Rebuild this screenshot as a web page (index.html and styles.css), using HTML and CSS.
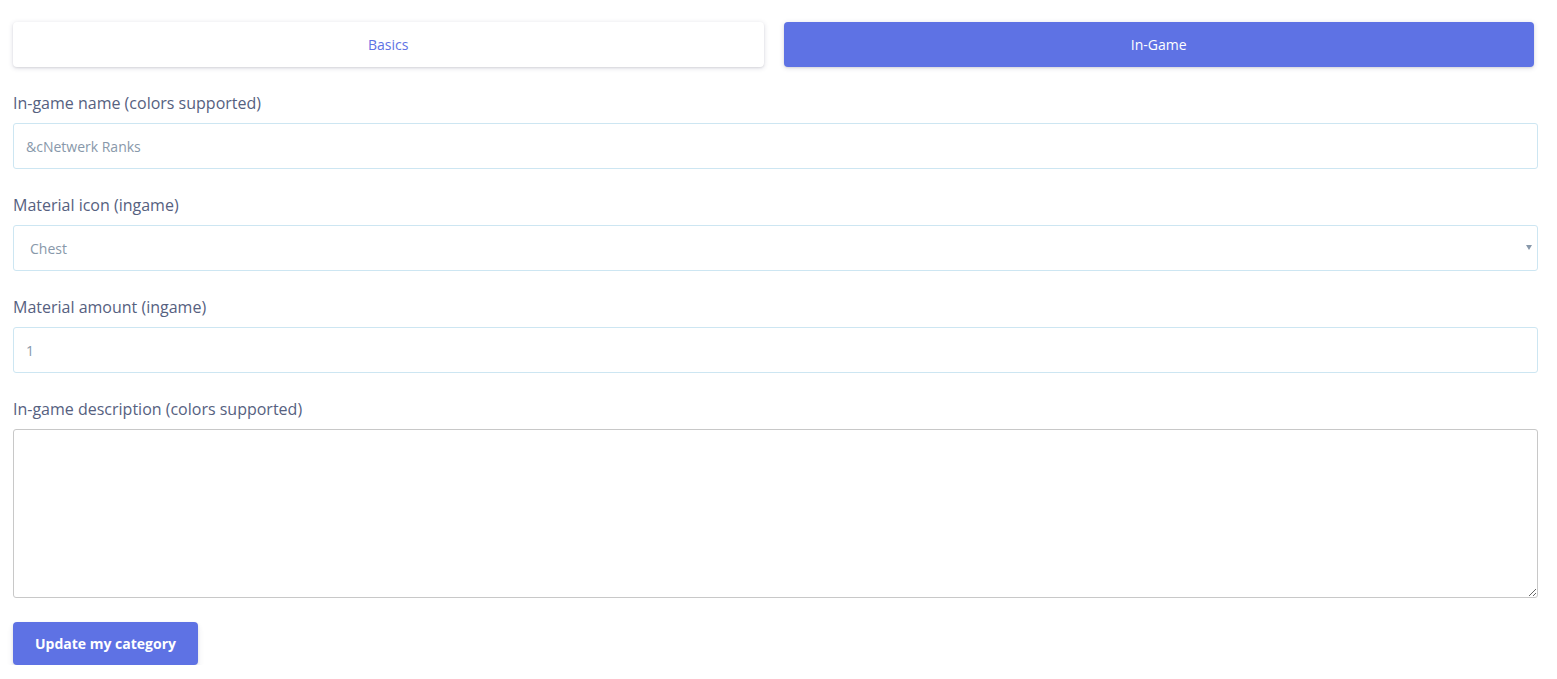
FILE: index.html
```html
<!DOCTYPE html>
<html lang="en">
<head>
  <meta charset="UTF-8">
  <meta name="viewport" content="width=device-width, initial-scale=1.0">
  <title>Edit category</title>
  <link rel="stylesheet" href="styles.css">
</head>
<body>
  <div class="page">
    <div class="tabs">
      <a class="tab">Basics</a>
      <a class="tab active">In-Game</a>
    </div>

    <form class="category-form">
      <div class="form-group">
        <label class="form-label" for="ingameName">In-game name (colors supported)</label>
        <input class="form-control" type="text" id="ingameName" value="&amp;cNetwerk Ranks">
      </div>

      <div class="form-group">
        <label class="form-label" for="materialIcon">Material icon (ingame)</label>
        <div class="select-wrap">
          <select class="form-control" id="materialIcon">
            <option>Chest</option>
          </select>
          <span class="select-arrow"></span>
        </div>
      </div>

      <div class="form-group">
        <label class="form-label" for="materialAmount">Material amount (ingame)</label>
        <input class="form-control" type="text" id="materialAmount" value="1">
      </div>

      <div class="form-group">
        <label class="form-label" for="ingameDescription">In-game description (colors supported)</label>
        <textarea class="form-textarea" id="ingameDescription"></textarea>
      </div>

      <button type="button" class="btn-primary">Update my category</button>
    </form>
  </div>
</body>
</html>
```

FILE: styles.css
```css
body {
  margin: 0;
  font-family: "Open Sans", sans-serif;
  background-color: #ffffff;
  color: #525f7f;
}

.page {
  padding: 22px 19px 0 13px;
}

.tabs {
  display: flex;
  gap: 20px;
  margin-right: 4px;
}

.tab {
  flex: 1;
  height: 45px;
  display: flex;
  align-items: center;
  justify-content: center;
  font-size: 14px;
  color: #5e72e4;
  background-color: #ffffff;
  border-radius: 4px;
  box-shadow: 0 1px 5px rgba(50, 50, 93, 0.18), 0 1px 2px rgba(0, 0, 0, 0.07);
  cursor: pointer;
}

.tab.active {
  background-color: #5e72e4;
  color: #ffffff;
}

.category-form {
  margin-top: 25px;
}

.form-group {
  margin-bottom: 25px;
}

.form-label {
  display: block;
  font-size: 16px;
  line-height: 22px;
  margin-bottom: 9px;
  color: #56617f;
}

.form-control {
  display: block;
  width: 100%;
  height: 46px;
  box-sizing: border-box;
  padding: 0 12px;
  font-family: "Open Sans", sans-serif;
  font-size: 14px;
  color: #8898aa;
  background-color: #ffffff;
  border: 1px solid #cde6f2;
  border-radius: 3px;
  outline: none;
}

select.form-control {
  appearance: none;
  -webkit-appearance: none;
  padding-left: 16px;
}

.select-wrap {
  position: relative;
}

/* small down triangle on the right of the select */
.select-arrow {
  position: absolute;
  right: 6px;
  top: 20px;
  width: 0;
  height: 0;
  border-left: 3px solid transparent;
  border-right: 3px solid transparent;
  border-top: 5px solid #8898aa;
  pointer-events: none;
}

.form-textarea {
  display: block;
  width: 100%;
  height: 169px;
  box-sizing: border-box;
  padding: 8px 12px;
  font-family: "Open Sans", sans-serif;
  font-size: 14px;
  color: #8898aa;
  border: 1px solid #c8c8c8;
  border-radius: 3px;
  resize: vertical;
  outline: none;
}

.btn-primary {
  margin-top: -1px;
  height: 43px;
  padding: 0 22px;
  font-family: "Open Sans", sans-serif;
  font-size: 14px;
  font-weight: 700;
  color: #ffffff;
  background-color: #5e72e4;
  border: none;
  border-radius: 4px;
  box-shadow: 0 4px 6px rgba(50, 50, 93, 0.11), 0 1px 3px rgba(0, 0, 0, 0.08);
  cursor: pointer;
}
```
